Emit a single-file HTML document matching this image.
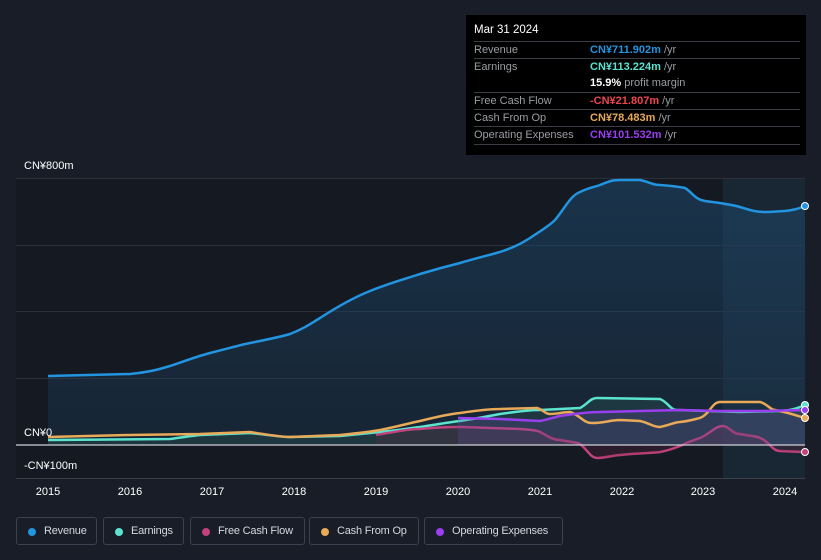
<!DOCTYPE html>
<html><head><meta charset="utf-8"><style>
html,body{margin:0;width:821px;height:560px;overflow:hidden}
body{background:#181d28;font-family:"Liberation Sans",sans-serif;position:relative}
.tip{position:absolute;left:466px;top:15px;width:340px;height:140px;background:#000;color:#fff;font-size:11px}
.tip .d{position:absolute;left:8px;top:9px;font-size:11.5px}
.row{position:absolute;left:8px;width:326px;height:17px;border-top:1px solid #3a3d44;line-height:17px;color:#9a9da3}
.row span{position:absolute;left:116px;font-weight:bold}
.row i{font-style:normal;color:#9a9da3;font-weight:normal}
.lab{position:absolute;color:#fff;font-size:11px}
.leg{position:absolute;top:517px;height:28px;border:1px solid #3b4150;border-radius:3px;color:#d6d8dd;font-size:11px;line-height:27px;box-sizing:border-box;padding-left:27px;white-space:nowrap;letter-spacing:-0.2px}
.leg b{position:absolute;left:11px;top:10px;width:8px;height:8px;border-radius:50%}
</style></head><body>
<svg width="821" height="560" style="position:absolute;left:0;top:0">
<defs><linearGradient id="rg" x1="0" y1="0" x2="0" y2="1"><stop offset="0" stop-color="#1d4a6e" stop-opacity=".55"/><stop offset="1" stop-color="#1d3a55" stop-opacity=".35"/></linearGradient></defs>
<rect x="16" y="178" width="789" height="300" fill="#141922"/>
<rect x="723" y="178" width="82" height="300" fill="#1a2a3a" opacity=".8"/>
<g stroke="#2b303b" stroke-width="1"><line x1="16" y1="178.5" x2="805" y2="178.5"/><line x1="16" y1="245.5" x2="805" y2="245.5"/><line x1="16" y1="311.5" x2="805" y2="311.5"/><line x1="16" y1="378.5" x2="805" y2="378.5"/></g>
<path d="M48,376 L130,374 C150,372 160,369 170,366 C185,361 195,357 210,353 C230,348 240,345 250,343 C270,339 280,337 290,334 C305,328 310,324 320,318 C340,305 355,297 370,291 C390,283 405,279 420,274 C440,268 448,266 460,263 C480,257 490,255 500,252 C515,247 522,243 530,238 C540,231 548,227 555,220 C565,208 570,196 580,192 C590,187 595,187 600,185 C610,181 612,180 620,180 L640,180 C650,182 652,185 660,185 C675,186 680,187 685,188 C692,192 694,199 705,201 C720,203 730,204 740,207 C750,210 755,212 765,212 C775,212 780,211 785,211 C795,210 800,208 805,206 L805,445 L48,445 Z" fill="url(#rg)"/>
<path d="M48,376 L130,374 C150,372 160,369 170,366 C185,361 195,357 210,353 C230,348 240,345 250,343 C270,339 280,337 290,334 C305,328 310,324 320,318 C340,305 355,297 370,291 C390,283 405,279 420,274 C440,268 448,266 460,263 C480,257 490,255 500,252 C515,247 522,243 530,238 C540,231 548,227 555,220 C565,208 570,196 580,192 C590,187 595,187 600,185 C610,181 612,180 620,180 L640,180 C650,182 652,185 660,185 C675,186 680,187 685,188 C692,192 694,199 705,201 C720,203 730,204 740,207 C750,210 755,212 765,212 C775,212 780,211 785,211 C795,210 800,208 805,206" fill="none" stroke="#2394e0" stroke-width="2.5"/>
<path d="M48,440 L170,439 C185,437 190,436 200,435 L250,433 C270,435 280,437 290,437 L340,436 C360,434 370,433 380,432 C400,430 410,428 420,427 C440,424 450,422 460,421 C480,418 490,416 500,414 C520,411 530,410 540,410 L580,408 C588,404 590,398 597,398 L660,399 C668,402 670,410 677,410 L740,412 L780,411 C795,410 800,407 805,405 L805,445 L48,445Z" fill="#2a5a55" opacity=".35"/>
<path d="M48,440 L170,439 C185,437 190,436 200,435 L250,433 C270,435 280,437 290,437 L340,436 C360,434 370,433 380,432 C400,430 410,428 420,427 C440,424 450,422 460,421 C480,418 490,416 500,414 C520,411 530,410 540,410 L580,408 C588,404 590,398 597,398 L660,399 C668,402 670,410 677,410 L740,412 L780,411 C795,410 800,407 805,405" fill="none" stroke="#5be3cf" stroke-width="2.5"/>
<path d="M376,435 C400,431 410,429 420,429 C440,427 450,427 460,427 L520,429 C532,430 535,430 540,432 C548,436 552,440 560,440 C570,442 575,442 580,444 C588,450 590,458 598,458 C610,457 615,455 620,455 C640,453 650,453 660,452 C670,450 675,448 680,446 C690,441 695,440 700,438 C710,434 715,426 723,426 C730,427 732,434 740,434 C750,436 755,436 760,438 C770,442 772,451 780,451 L805,452" fill="none" stroke="#c2427d" stroke-width="2.5"/>
<path d="M376,435 L460,427 L540,432 L580,444 L598,458 L660,452 L700,438 L723,426 L760,438 L780,451 L805,452 L805,445 L376,445Z" fill="#6a2845" opacity=".25"/>
<path d="M458,418 L500,419 L540,421 C550,419 555,417 560,416 C580,413 590,412 600,412 L640,411 L680,410 L720,411 L760,411 L805,410 L805,445 L458,445Z" fill="#6b4fa0" opacity=".25"/>
<path d="M48,437 L130,435 L200,434 L250,432 C270,435 280,437 290,437 L340,435 C360,433 370,432 380,430 C400,426 410,423 420,421 C440,416 450,414 460,413 C480,410 490,409 500,409 L537,408 C544,410 545,414 550,414 C558,414 563,412 570,412 C580,415 583,423 592,423 C605,423 610,420 620,420 L640,421 C650,423 652,427 660,427 C670,425 675,422 680,422 C690,421 695,419 700,418 C710,414 712,402 720,402 L760,402 C768,404 770,410 775,410 C790,413 798,416 805,418" fill="none" stroke="#e8a958" stroke-width="2.5"/>
<path d="M458,418 L500,419 L540,421 C550,419 555,417 560,416 C580,413 590,412 600,412 L640,411 L680,410 L720,411 L760,411 L805,410" fill="none" stroke="#9a3ff0" stroke-width="2.5"/>
<line x1="16" y1="445" x2="805" y2="445" stroke="#cfd2d8" stroke-width="1.2"/>
<line x1="16" y1="478.5" x2="805" y2="478.5" stroke="#3a3f4a"/>
<circle cx="805" cy="206" r="3.5" fill="#2394e0" stroke="#fff" stroke-width="1"/>
<circle cx="805" cy="405" r="3.5" fill="#5be3cf" stroke="#fff" stroke-width="1"/>
<circle cx="805" cy="418" r="3.5" fill="#e8a958" stroke="#fff" stroke-width="1"/>
<circle cx="805" cy="410" r="3.5" fill="#9a3ff0" stroke="#fff" stroke-width="1"/>
<circle cx="805" cy="452" r="3.5" fill="#c2427d" stroke="#fff" stroke-width="1"/>
<g fill="#fff" font-size="11" font-family="Liberation Sans" text-anchor="middle">
<text x="48" y="495">2015</text><text x="130" y="495">2016</text><text x="212" y="495">2017</text><text x="294" y="495">2018</text><text x="376" y="495">2019</text><text x="458" y="495">2020</text><text x="540" y="495">2021</text><text x="622" y="495">2022</text><text x="703" y="495">2023</text><text x="785" y="495">2024</text>
</g>
</svg>
<div class="lab" style="left:24px;top:160px">CN¥800m</div>
<div class="lab" style="left:24px;top:427px">CN¥0</div>
<div class="lab" style="left:24px;top:460px">-CN¥100m</div>
<div class="tip">
<div class="d">Mar 31 2024</div>
<div class="row" style="top:26px">Revenue<span style="color:#2394e0">CN¥711.902m <i>/yr</i></span></div>
<div class="row" style="top:43px">Earnings<span style="color:#5be3cf">CN¥113.224m <i>/yr</i></span></div>
<div class="row" style="top:60px;border-top:none"><span style="color:#fff">15.9% <i>profit margin</i></span></div>
<div class="row" style="top:77px">Free Cash Flow<span style="color:#f0454a">-CN¥21.807m <i>/yr</i></span></div>
<div class="row" style="top:94px">Cash From Op<span style="color:#e8a958">CN¥78.483m <i>/yr</i></span></div>
<div class="row" style="top:111px;border-bottom:1px solid #3a3d44">Operating Expenses<span style="color:#9a3ff0">CN¥101.532m <i>/yr</i></span></div>
</div>
<div class="leg" style="left:16px;width:81px"><b style="background:#2394e0"></b>Revenue</div>
<div class="leg" style="left:103px;width:81px"><b style="background:#5be3cf"></b>Earnings</div>
<div class="leg" style="left:190px;width:115px"><b style="background:#c2427d"></b>Free Cash Flow</div>
<div class="leg" style="left:309px;width:110px"><b style="background:#e8a958"></b>Cash From Op</div>
<div class="leg" style="left:424px;width:139px"><b style="background:#9a3ff0"></b>Operating Expenses</div>
</body></html>
